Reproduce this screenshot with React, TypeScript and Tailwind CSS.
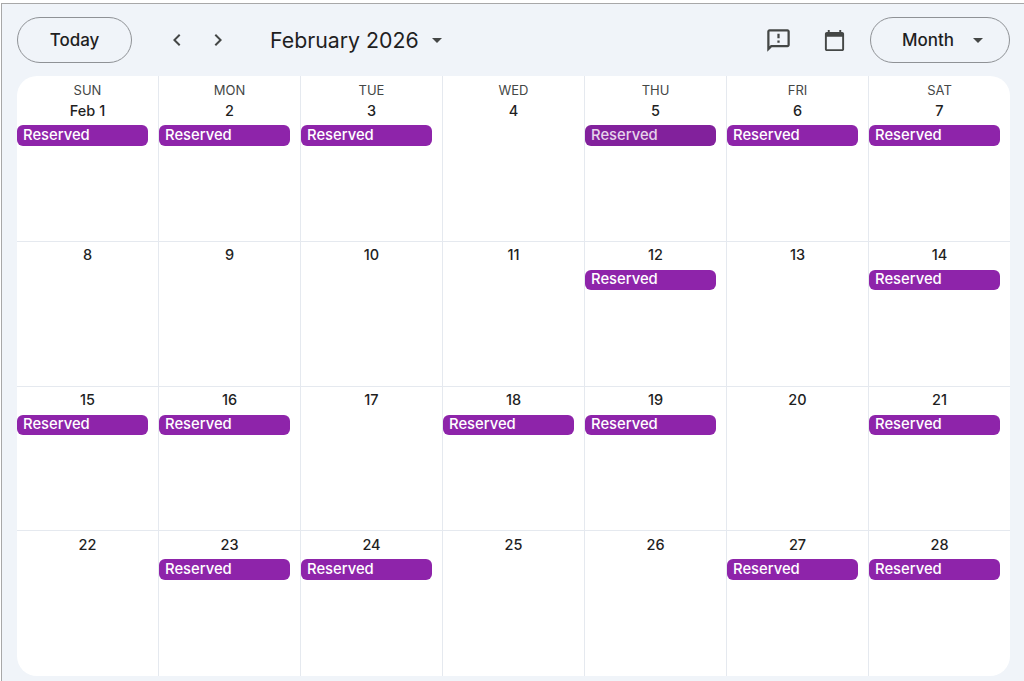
const rows = [
  { height: "h-[165px]", days: [
    { label: "Feb 1", reserved: true }, { label: "2", reserved: true }, { label: "3", reserved: true },
    { label: "4", reserved: false }, { label: "5", reserved: true, hover: true }, { label: "6", reserved: true }, { label: "7", reserved: true },
  ] },
  { height: "h-[145px]", days: [
    { label: "8", reserved: false }, { label: "9", reserved: false }, { label: "10", reserved: false },
    { label: "11", reserved: false }, { label: "12", reserved: true }, { label: "13", reserved: false }, { label: "14", reserved: true },
  ] },
  { height: "h-[144px]", days: [
    { label: "15", reserved: true }, { label: "16", reserved: true }, { label: "17", reserved: false },
    { label: "18", reserved: true }, { label: "19", reserved: true }, { label: "20", reserved: false }, { label: "21", reserved: true },
  ] },
  { height: "h-[146px]", days: [
    { label: "22", reserved: false }, { label: "23", reserved: true }, { label: "24", reserved: true },
    { label: "25", reserved: false }, { label: "26", reserved: false }, { label: "27", reserved: true }, { label: "28", reserved: true },
  ] },
];

const weekdays = ["SUN", "MON", "TUE", "WED", "THU", "FRI", "SAT"];

function Caret() {
  return (
    <svg width="10" height="5" viewBox="0 0 10 5" className="fill-[#444746]">
      <path d="M0 0l5 5 5-5z" />
    </svg>
  );
}

function Toolbar() {
  return (
    <div className="flex h-[72px] items-center pl-[15px] pr-[14px]">
      <button className="h-[46px] w-[115px] rounded-full border border-[#8f9296] pt-px text-[17px] font-medium text-[#1f1f1f]">
        Today
      </button>
      <div className="ml-[33px] flex w-[65px] justify-between">
        <svg width="24" height="24" viewBox="0 0 24 24" className="fill-[#444746]">
          <path d="M15.41 7.41 14 6l-6 6 6 6 1.41-1.41L10.830 12z" />
        </svg>
        <svg width="24" height="24" viewBox="0 0 24 24" className="fill-[#444746]">
          <path d="M8.590 16.590 10 18l6-6-6-6-1.410 1.410L13.170 12z" />
        </svg>
      </div>
      <span className="ml-[40px] pt-px text-[21.300px] text-[#1f1f1f]">February 2026</span>
      <span className="ml-[13px] flex"><Caret /></span>
      <div className="ml-auto flex items-center">
        <svg width="27" height="27" viewBox="0 0 24 24" className="fill-[#444746]">
          <path d="M20 2H4c-1.100 0-2 .9-2 2v18l4-4h14c1.100 0 2-.9 2-2V4c0-1.100-.9-2-2-2zm0 14H5.200L4 17.200V4h16v12zM11 12h2v2h-2zm0-6h2v4h-2z" />
        </svg>
        <svg width="23" height="23" viewBox="0 0 24 24" className="ml-[31px] fill-[#444746]">
          <path d="M20 3h-1V1h-2v2H7V1H5v2H4c-1.100 0-2 .9-2 2v16c0 1.100.9 2 2 2h16c1.100 0 2-.9 2-2V5c0-1.100-.9-2-2-2zm0 18H4V8h16v13z" />
        </svg>
        <button className="ml-[24px] flex h-[46px] w-[140px] items-center justify-center gap-[19px] rounded-full border border-[#8f9296] pl-[5px] pt-px text-[17px] font-medium text-[#1f1f1f]">
          Month
          <Caret />
        </button>
      </div>
    </div>
  );
}

export default function App() {
  return (
    <div className="h-[681px] w-[1024px] overflow-hidden bg-white pt-[3px] font-['Inter',sans-serif]">
      <div className="ml-px h-full border-l border-t border-[#a8a8a8] bg-[#f0f4f9]">
        <Toolbar />
        <div className="ml-[15px] w-[993px] overflow-hidden rounded-[20px] bg-white">
          {rows.map((row, i) => (
            <div key={i} className={`grid grid-cols-[141px_repeat(6,142px)] ${row.height} ${i > 0 ? "border-t border-[#e5e9ef]" : ""}`}>
              {row.days.map((day, j) => (
                <div key={j} className={`flex flex-col ${j > 0 ? "border-l border-[#e5e9ef]" : ""} ${i === 0 ? "pt-[4px]" : i === 3 ? "pt-[4px]" : "pt-[3px]"}`}>
                  {i === 0 && (
                    <div className="h-[21px] text-center text-[13px] leading-[20px] text-[#444746]">{weekdays[j]}</div>
                  )}
                  <div className="h-[20px] text-center text-[14.500px] font-medium leading-[20px] text-[#1f1f1f]">{day.label}</div>
                  {day.reserved && (
                    <div className={`mr-[10px] rounded-[6px] pl-[6px] text-[14.800px] font-medium ${i === 1 || i === 2 ? "mt-[5px] h-[20px] leading-[18px]" : "mt-[4px] h-[21px] leading-[20px]"} ${day.hover ? "bg-[#82219c] text-[#e6d3eb]" : "bg-[#8e24aa] text-white"}`}>
                      Reserved
                    </div>
                  )}
                </div>
              ))}
            </div>
          ))}
        </div>
      </div>
    </div>
  );
}
